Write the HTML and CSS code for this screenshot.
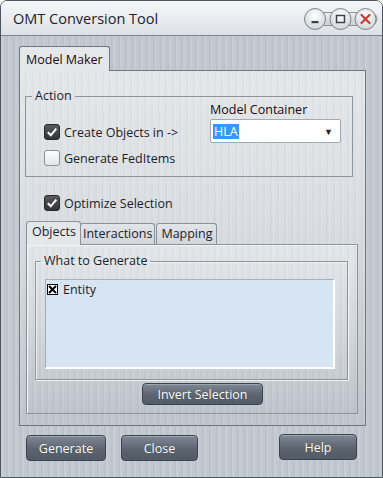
FILE: index.html
```html
<!DOCTYPE html>
<html>
<head>
<meta charset="utf-8">
<link rel="stylesheet" href="styles.css">
</head>
<body>
<div class="window">
  <div class="titlebar">
    <div class="title">OMT Conversion Tool</div>
    <svg class="wincontrols" width="76" height="24" viewBox="0 0 76 24">
      <defs>
        <linearGradient id="pill" x1="0" y1="0" x2="0" y2="1">
          <stop offset="0" stop-color="#eef0f2"/>
          <stop offset="1" stop-color="#c9ced3"/>
        </linearGradient>
        <radialGradient id="btn" cx="0.5" cy="0.35" r="0.65">
          <stop offset="0" stop-color="#ffffff"/>
          <stop offset="1" stop-color="#d0d5da"/>
        </radialGradient>
      </defs>
      <rect x="2" y="5.5" width="72" height="13" rx="6.5" fill="url(#pill)" stroke="#8b939c"/>
      <circle cx="12" cy="12" r="10.5" fill="url(#btn)" stroke="#7b838c"/>
      <circle cx="37.5" cy="12" r="10.5" fill="url(#btn)" stroke="#7b838c"/>
      <circle cx="62.5" cy="12" r="10.5" fill="url(#btn)" stroke="#7b838c"/>
      <rect x="8.5" y="14" width="7" height="2.2" fill="#3d434a"/>
      <rect x="33.5" y="8.5" width="8" height="7" fill="none" stroke="#3d434a" stroke-width="1.5"/>
      <path d="M58.5 8 L66.5 16 M66.5 8 L58.5 16" stroke="#c43b2f" stroke-width="2.2" stroke-linecap="round"/>
    </svg>
  </div>
  <div class="body">
    <div class="tabs">
      <div class="tab active">Model Maker</div>
    </div>
    <div class="panel">
      <fieldset class="group action">
        <legend>Action</legend>
        <div class="action-row">
          <div class="checks">
            <div class="check-row"><span class="cb checked"><svg width="16" height="16" viewBox="0 0 16 16"><path d="M3.8 8.3 L6.8 11.3 L12.3 4.6" fill="none" stroke="#fff" stroke-width="2"/></svg></span>Create Objects in -&gt;</div>
            <div class="check-row"><span class="cb"></span>Generate FedItems</div>
          </div>
          <div class="container">
            <div class="mc-label">Model Container</div>
            <div class="select"><span class="sel-text">HLA</span><span class="arrow">▼</span></div>
          </div>
        </div>
      </fieldset>
      <div class="check-row optimize"><span class="cb checked"><svg width="16" height="16" viewBox="0 0 16 16"><path d="M3.8 8.3 L6.8 11.3 L12.3 4.6" fill="none" stroke="#fff" stroke-width="2"/></svg></span>Optimize Selection</div>
      <div class="inner-tabs">
        <div class="itab active">Objects</div>
        <div class="itab">Interactions</div>
        <div class="itab">Mapping</div>
      </div>
      <div class="inner-panel">
        <fieldset class="group what">
          <legend>What to Generate</legend>
          <div class="listbox">
            <div class="item"><svg class="xbox" width="11" height="11" viewBox="0 0 11 11"><rect x="0.5" y="0.5" width="10" height="10" fill="#fff" stroke="#000"/><path d="M2 2 L9 9 M9 2 L2 9" stroke="#000" stroke-width="2"/></svg>Entity</div>
          </div>
        </fieldset>
        <div class="btn invert">Invert Selection</div>
      </div>
    </div>
    <div class="footer">
      <div class="btn gen">Generate</div>
      <div class="btn close">Close</div>
      <div class="btn help">Help</div>
    </div>
  </div>
</div>
</body>
</html>
```
FILE: styles.css
```css
html, body { margin: 0; padding: 0; }
body {
  font-family: "Open Sans", "Noto Sans", sans-serif;
  font-size: 12px;
  color: #1c222b;
  background: #ffffff;
}
.window {
  width: 383px;
  height: 478px;
  box-sizing: border-box;
  border: 1px solid #4c545e;
  border-radius: 7px 7px 0 0;
  overflow: hidden;
  display: flex;
  flex-direction: column;
}
.titlebar {
  height: 34px;
  flex: none;
  border-bottom: 1px solid #7c858f;
  background: linear-gradient(#f6f7f9, #dde1e5);
  display: flex;
  align-items: center;
  justify-content: space-between;
  padding: 0 3px 0 12px;
}
.title {
  font-size: 14.5px;
  color: #1a2230;
  margin-top: 1px;
}
.wincontrols { display: block; margin-top: 2px; }
.body {
  flex: 1;
  background:
    repeating-linear-gradient(90deg, rgba(255,255,255,0.10) 0 2px, rgba(0,0,0,0) 2px 5px, rgba(0,0,0,0.03) 5px 7px),
    #c2c8cf;
  padding: 10px 16px 0 18px;
  display: flex;
  flex-direction: column;
}
.tabs { display: flex; height: 24px; }
.tab {
  box-sizing: border-box;
  height: 25px;
  width: 91px;
  padding: 4px 0 0 6px;
  font-size: 12.5px;
  background: #e5e8eb;
  border: 1px solid #6d7681;
  border-bottom: none;
  border-radius: 3px 3px 0 0;
  position: relative;
  z-index: 1;
  color: #200a10;
}
.panel {
  box-sizing: border-box;
  width: 347px;
  height: 356px;
  border: 1px solid #6d7681;
  background:
    repeating-linear-gradient(90deg, rgba(255,255,255,0.08) 0 2px, rgba(0,0,0,0) 2px 5px, rgba(0,0,0,0.02) 5px 7px),
    linear-gradient(#e4e7ea 0%, #dadee2 40%, #cbd0d6 75%, #bfc5cc 100%);
  padding: 18px 12px 0 5px;
  display: flex;
  flex-direction: column;
}
.group {
  margin: 0;
  padding: 0;
  border: 1px solid #8e959d;
  min-width: 0;
}
.group legend {
  padding: 0 3px;
  line-height: 14px;
  font-size: 12.5px;
  color: #1c222b;
}
.action { width: 328px; box-sizing: border-box; }
.action legend { margin-left: 6px; }
.action-row { display: flex; }
.checks {
  width: 166px;
  padding: 21px 0 10px 18px;
  display: flex;
  flex-direction: column;
  gap: 10px;
}
.check-row {
  display: flex;
  align-items: center;
  height: 16px;
  font-size: 12.5px;
}
.cb {
  box-sizing: border-box;
  width: 16px;
  height: 16px;
  border-radius: 3px;
  border: 1px solid #8d9197;
  background: linear-gradient(#ffffff, #e1e3e6);
  margin-right: 4px;
  flex: none;
  display: flex;
}
.cb.checked {
  border: 1px solid #2a2a2a;
  background: linear-gradient(#5a5a5a, #333333);
}
.cb svg { margin: -1px; }
.container { padding-top: 0; }
.mc-label { font-size: 12.5px; line-height: 16px; margin-top: -1px; color: #200a10; }
.select {
  box-sizing: border-box;
  width: 131px;
  height: 24px;
  margin-top: 1px;
  background: #ffffff;
  border: 1px solid #a3a9b0;
  border-radius: 2px;
  display: flex;
  align-items: center;
  justify-content: space-between;
  padding: 0 7px 0 2px;
}
.sel-text {
  background: #3399ff;
  color: #ffffff;
  font-size: 12.5px;
  line-height: 15px;
  padding: 0 1px;
}
.arrow { font-size: 9px; color: #222; }
.optimize { margin: 18px 0 0 19px; }
.inner-tabs {
  display: flex;
  align-items: flex-end;
  margin: 10px 0 0 1px;
  height: 23px;
}
.itab {
  box-sizing: border-box;
  height: 21px;
  border: 1px solid #8a929b;
  border-bottom: none;
  border-radius: 3px 3px 0 0;
  background: linear-gradient(#e1e4e8, #d2d6db);
  font-size: 12.5px;
  padding: 1px 2px 0 2px;
  color: #1c222b;
}
.itab.active {
  height: 24px;
  background: #e4e7ea;
  padding: 1px 4px 0 5px;
  position: relative;
  z-index: 1;
  margin-bottom: -1px;
}
.itab + .itab { margin-left: -1px; }
.itab:nth-child(3) { margin-left: 1px; padding: 1px 4px 0 4px; }
.inner-panel {
  box-sizing: border-box;
  width: 332px;
  height: 170px;
  margin-left: 1px;
  border: 1px solid #8a929b;
  box-shadow: inset 1px 1px 0 #f2f4f6;
  background:
    repeating-linear-gradient(90deg, rgba(255,255,255,0.08) 0 2px, rgba(0,0,0,0) 2px 5px, rgba(0,0,0,0.02) 5px 7px),
    linear-gradient(#e3e6e9 0%, #d7dbe0 40%, #c8cdd3 75%, #bec4cb 100%);
  padding: 9px 0 0 8px;
  display: flex;
  flex-direction: column;
}
.what {
  width: 313px;
  box-sizing: border-box;
  border-color: #8d949c;
  box-shadow: 1px 1px 0 #eef0f2, inset 1px 1px 0 #eef0f2;
}
.what legend { margin-left: 5px; }
.listbox {
  box-sizing: border-box;
  width: 290px;
  height: 90px;
  margin: 11px 0 10px 9px;
  background: #d7e4f1;
  border: 1px solid #a6adb5;
  border-right: 2px solid #ffffff;
  border-bottom: 2px solid #ffffff;
  padding: 2px 0 0 1px;
}
.item {
  display: flex;
  align-items: center;
  font-size: 12.5px;
  height: 14px;
}
.xbox { margin-right: 5px; }
.btn {
  box-sizing: border-box;
  display: flex;
  align-items: center;
  justify-content: center;
  color: #ffffff;
  font-size: 12.5px;
  background: linear-gradient(#7f8895, #5c6470 55%, #525a66);
  border: 1px solid #3d444e;
  border-radius: 4px;
  box-shadow: inset 0 1px 0 rgba(255,255,255,0.25);
  text-shadow: 0 0 1px rgba(0,0,0,0.4);
}
.invert {
  width: 121px;
  height: 22px;
  margin: 3px 0 0 107px;
}
.footer {
  display: flex;
  align-items: flex-start;
  padding: 9px 9px 0 7px;
}
.gen { width: 80px; height: 26px; }
.close { width: 77px; height: 26px; margin-left: 15px; }
.help { width: 78px; height: 26px; margin-left: auto; margin-top: -1px; }
```
